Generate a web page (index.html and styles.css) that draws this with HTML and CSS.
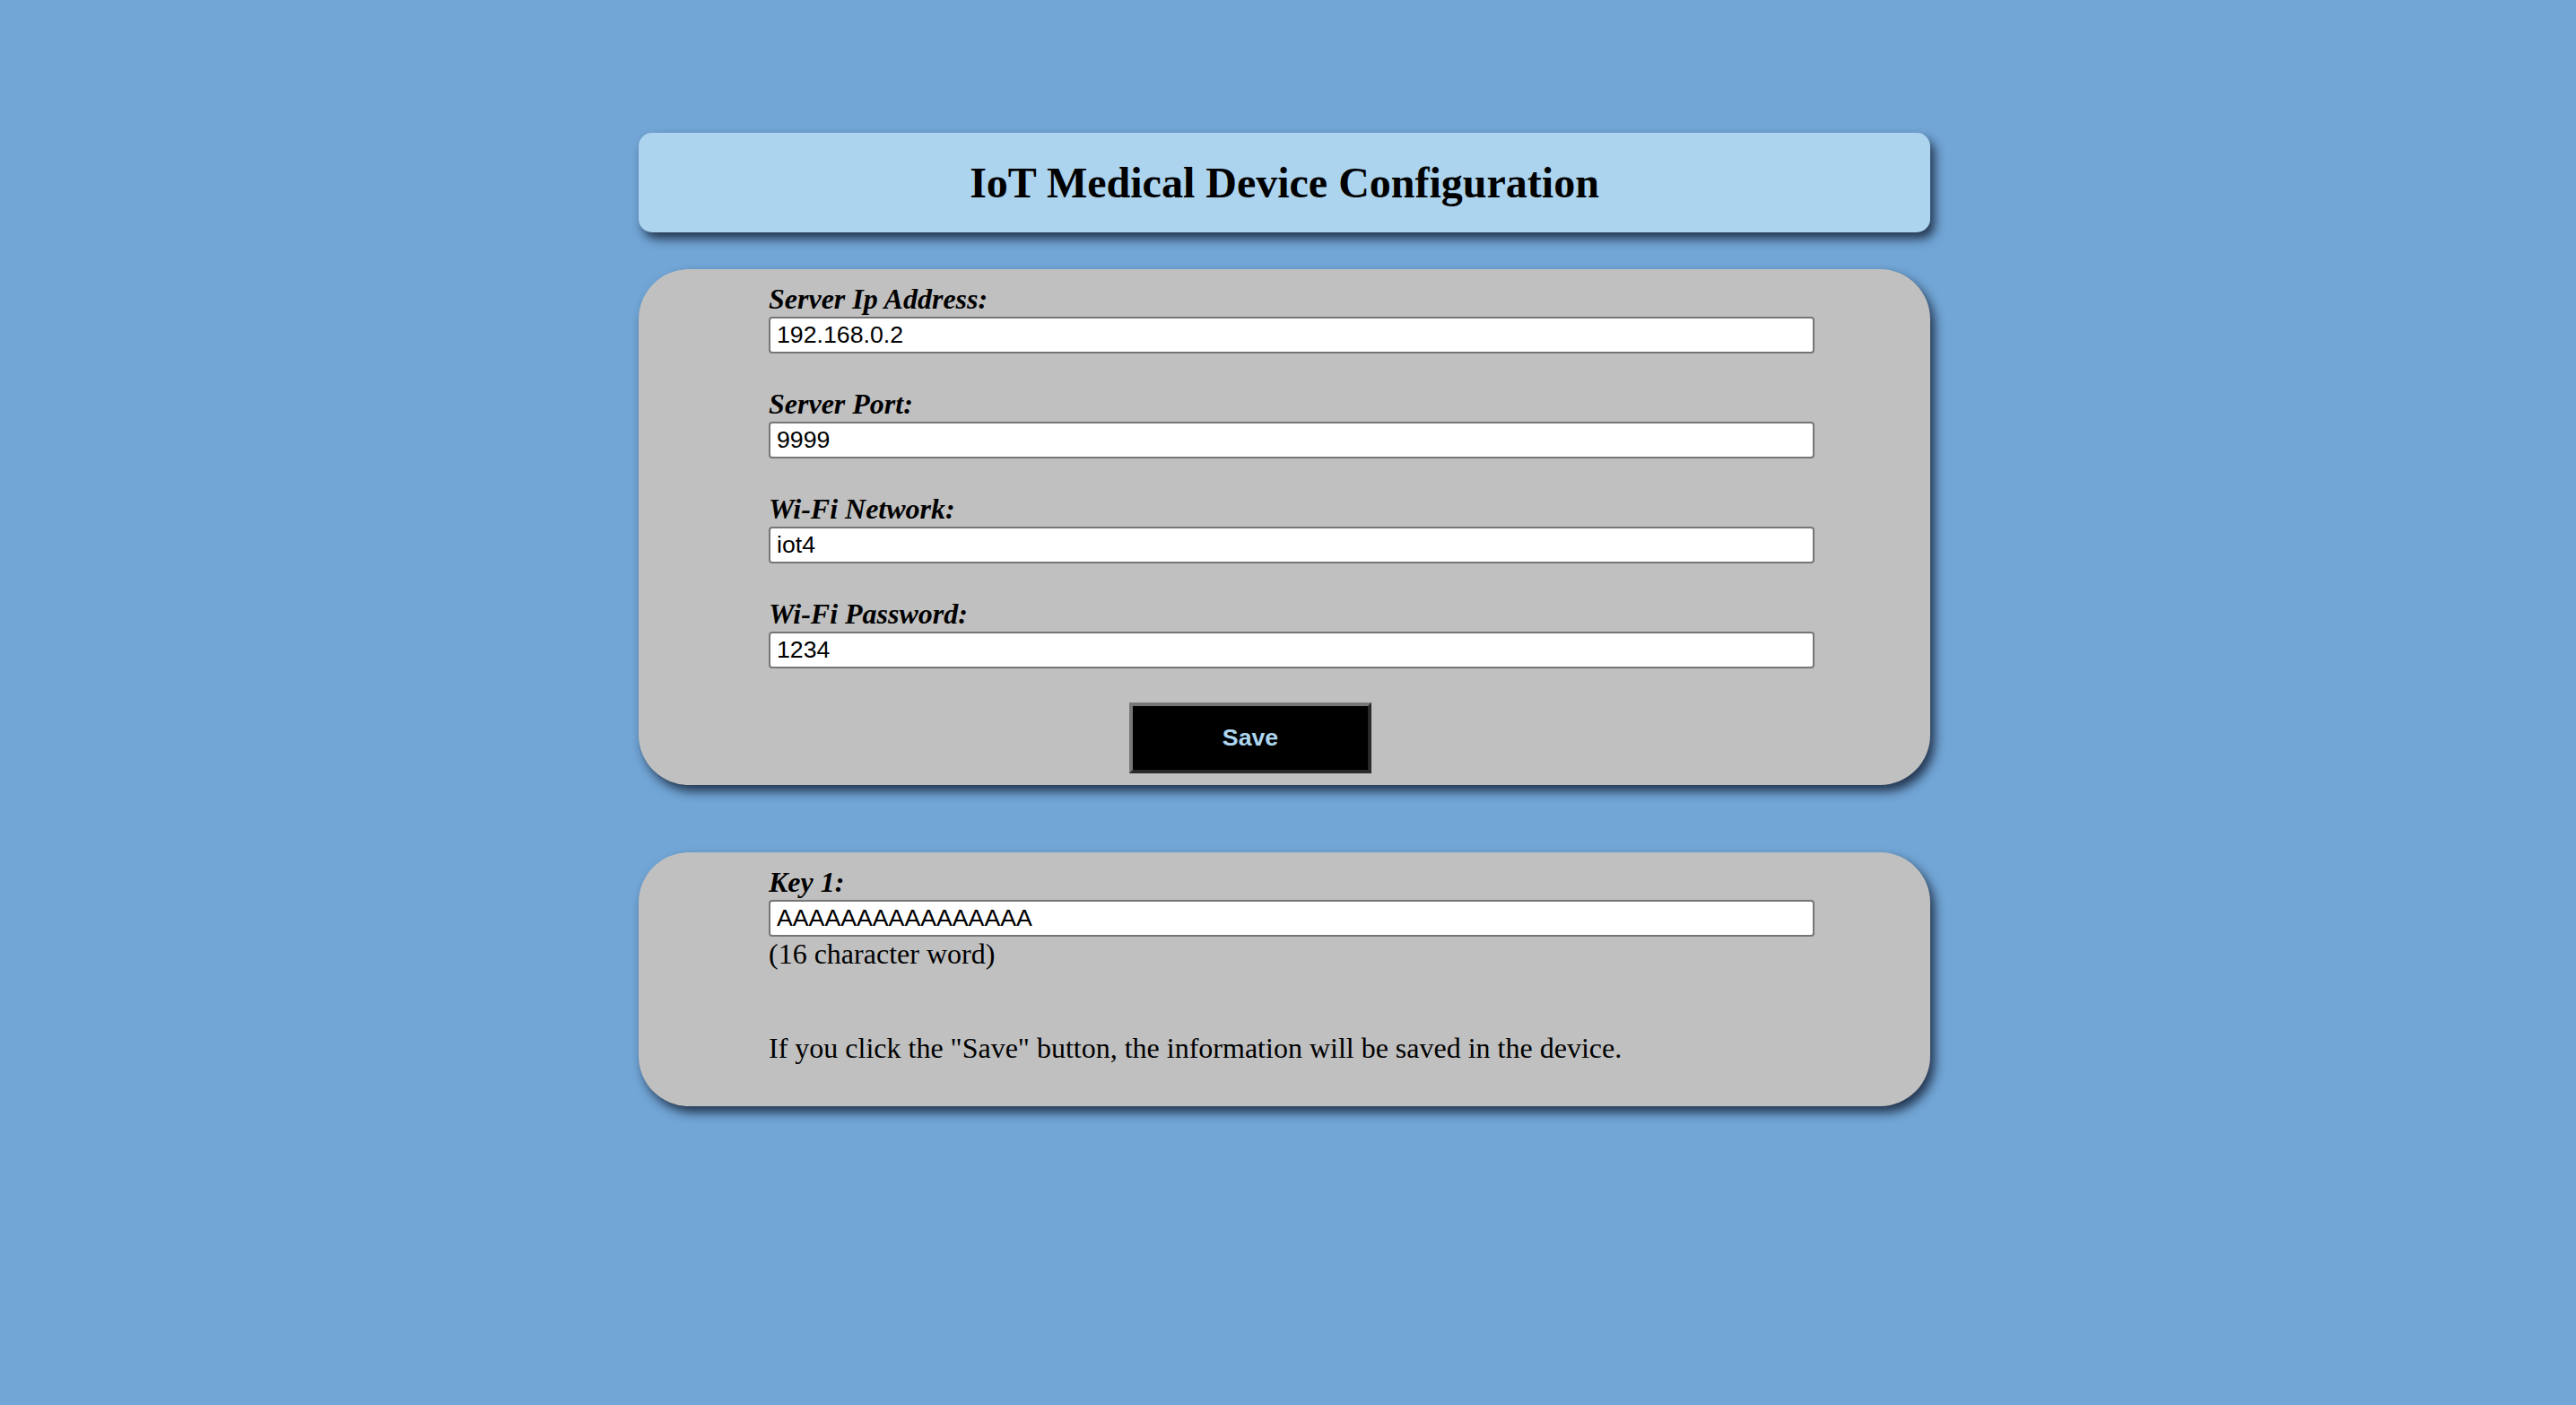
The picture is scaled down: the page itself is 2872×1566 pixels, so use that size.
FILE: index.html
```html
<!DOCTYPE html>
<html>
<head>
<meta charset="utf-8">
<title>IoT Medical Device Configuration</title>
<link rel="stylesheet" href="styles.css">
</head>
<body>
<div class="wrap">
  <div class="header"><h2 class="title">IoT Medical Device Configuration</h2></div>
  <div class="panel panel-form">
    <form class="form">
      <div class="field">
        <label class="label">Server Ip Address:</label>
        <input class="input" type="text" value="192.168.0.2">
      </div>
      <div class="field">
        <label class="label">Server Port:</label>
        <input class="input" type="text" value="9999">
      </div>
      <div class="field">
        <label class="label">Wi-Fi Network:</label>
        <input class="input" type="text" value="iot4">
      </div>
      <div class="field">
        <label class="label">Wi-Fi Password:</label>
        <input class="input" type="text" value="1234">
      </div>
      <button class="save" type="button">Save</button>
    </form>
  </div>
  <div class="panel panel-key">
    <div class="form">
      <label class="label">Key 1:</label>
      <input class="input" type="text" value="AAAAAAAAAAAAAAAA">
      <div class="hint">(16 character word)</div>
      <p class="note">If you click the "Save" button, the information will be saved in the device.</p>
    </div>
  </div>
</div>
</body>
</html>
```
FILE: styles.css
```css
html, body {
  margin: 0;
  padding: 0;
}
body {
  background: #72a6d6;
  font-family: "Liberation Serif", "Times New Roman", serif;
  color: #000;
  padding-right: 8px;
  min-height: 1566px;
  box-sizing: border-box;
}
.wrap {
  width: 1440px;
  margin: 0 auto;
  padding-top: 148px;
}
.header {
  background: #add4ee;
  border-radius: 15px;
  height: 111px;
  display: flex;
  align-items: center;
  justify-content: center;
  box-shadow: 5px 7px 12px rgba(15, 25, 45, 0.8);
}
.title {
  margin: 0;
  font-size: 48px;
  font-weight: bold;
  line-height: 55px;
}
.panel {
  background: #c0c0c0;
  border-radius: 56px;
  box-shadow: 5px 7px 12px rgba(15, 25, 45, 0.8);
  box-sizing: border-box;
}
.panel-form {
  margin-top: 41px;
  height: 575px;
  padding: 17px 0 11px 145px;
}
.panel-key {
  margin-top: 75px;
  height: 283px;
  padding: 17px 0 0 145px;
}
.form {
  width: 1166px;
  display: flex;
  flex-direction: column;
  align-items: flex-start;
}
.field {
  display: flex;
  flex-direction: column;
  width: 100%;
  margin-bottom: 40px;
}
.field:last-of-type {
  margin-bottom: 0;
}
.label {
  display: block;
  font-size: 32px;
  line-height: 33px;
  font-weight: bold;
  font-style: italic;
}
.input {
  box-sizing: border-box;
  width: 1166px;
  height: 41px;
  margin: 3px 0 0 0;
  padding: 0 7px;
  border: 2px solid #767676;
  border-radius: 4px;
  background: #fff;
  font-family: "Liberation Sans", Arial, sans-serif;
  font-size: 26.7px;
  color: #000;
  outline: none;
}
.save {
  margin: 38px 0 0 402px;
  width: 270px;
  height: 79px;
  box-sizing: border-box;
  background: #000;
  border-style: solid;
  border-width: 4px;
  border-color: #777 #2a2a2a #2a2a2a #777;
  color: #aed6f0;
  font-family: "Liberation Sans", Arial, sans-serif;
  font-weight: bold;
  font-size: 26.7px;
  padding: 0;
  cursor: pointer;
}
.hint {
  font-size: 32px;
  line-height: 33px;
  margin-top: 3px;
}
.note {
  font-size: 32px;
  line-height: 33px;
  margin: 72px 0 0 0;
}
```
